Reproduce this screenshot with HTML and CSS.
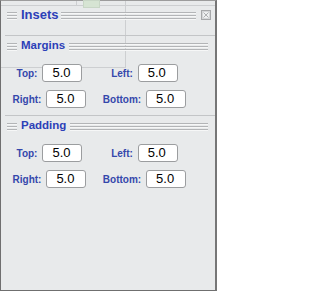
FILE: index.html
```html
<!DOCTYPE html>
<html>
<head>
<meta charset="utf-8">
<link rel="stylesheet" href="styles.css">
</head>
<body>
<div class="palette">
  <div class="backdrop" aria-hidden="true">
    <div class="bd-hline bd-top"></div>
    <div class="bd-vline bd-v1"></div>
    <div class="bd-vline bd-v2"></div>
    <div class="bd-hline bd-mid"></div>
    <div class="bd-green"></div>
  </div>

  <div class="titlebar">
    <span class="grip"></span>
    <span class="title">Insets</span>
    <span class="rules"></span>
    <span class="close">
      <svg width="10" height="10" viewBox="0 0 10 10">
        <rect x="0.5" y="0.5" width="9" height="9" fill="#eef0f1" stroke="#a6a8aa"/>
        <rect x="1.5" y="1.5" width="7" height="7" fill="none" stroke="#d4d6d8"/>
        <path d="M2.5 2.5 L7.5 7.5 M7.5 2.5 L2.5 7.5" stroke="#aeb0b2" stroke-width="1"/>
      </svg>
    </span>
  </div>

  <section class="group">
    <div class="group-head">
      <span class="grip"></span>
      <span class="title">Margins</span>
      <span class="rules"></span>
    </div>
    <div class="fields">
      <label class="field"><span class="lbl">Top:</span><span class="box">5.0</span></label>
      <label class="field"><span class="lbl">Left:</span><span class="box">5.0</span></label>
      <label class="field"><span class="lbl">Right:</span><span class="box">5.0</span></label>
      <label class="field"><span class="lbl">Bottom:</span><span class="box">5.0</span></label>
    </div>
  </section>

  <section class="group">
    <div class="group-head">
      <span class="grip"></span>
      <span class="title">Padding</span>
      <span class="rules"></span>
    </div>
    <div class="fields">
      <label class="field"><span class="lbl">Top:</span><span class="box">5.0</span></label>
      <label class="field"><span class="lbl">Left:</span><span class="box">5.0</span></label>
      <label class="field"><span class="lbl">Right:</span><span class="box">5.0</span></label>
      <label class="field"><span class="lbl">Bottom:</span><span class="box">5.0</span></label>
    </div>
  </section>
</div>
</body>
</html>
```
FILE: styles.css
```css
html, body {
  margin: 0;
  padding: 0;
}
body {
  width: 217px;
  height: 291px;
  overflow: hidden;
  font-family: "Liberation Sans", Arial, sans-serif;
}
.palette {
  position: relative;
  box-sizing: border-box;
  width: 217px;
  height: 291px;
  background: #e8eaeb;
  border-top: 1px solid #9c9c9c;
  border-left: 1px solid #6f6f6f;
  border-right: 2px solid #767676;
  border-bottom: 1px solid #6f6f6f;
}

/* content of the document showing through the translucent palette */
.backdrop {
  position: absolute;
  inset: 0;
  pointer-events: none;
}
.bd-hline {
  position: absolute;
  height: 1px;
  background: #cdcfd1;
}
.bd-top { top: 4px; left: 0; right: 0; }
.bd-mid { top: 66px; left: 0; width: 124px; }
.bd-vline {
  position: absolute;
  width: 1px;
  background: #cdcfd1;
}
.bd-v1 { left: 75px; top: 0; height: 5px; }
.bd-v2 { left: 124px; top: 0; height: 67px; }
.bd-green {
  position: absolute;
  left: 82px;
  top: -1px;
  width: 17px;
  height: 8px;
  background: #d6e4d3;
  border: 1px solid #c8d6c6;
  box-sizing: border-box;
}

.titlebar, .group-head {
  position: relative;
  display: flex;
  align-items: flex-start;
  height: 15px;
}
.titlebar {
  margin-top: 6px;
  padding-left: 6px;
  padding-right: 4px;
}
.grip {
  width: 10px;
  height: 8px;
  margin-top: 5px;
  background: repeating-linear-gradient(to bottom, #b3b5b7 0 1px, #f6f7f7 1px 2px, transparent 2px 3px);
}
.title {
  margin-left: 4px;
  margin-right: 2px;
  font-size: 13px;
  line-height: 15px;
  font-weight: bold;
  color: #2c40b8;
}
.rules {
  flex: 1;
  height: 8px;
  margin-top: 5px;
  background: repeating-linear-gradient(to bottom, #b3b5b7 0 1px, #f6f7f7 1px 2px, transparent 2px 3px);
}
.close {
  width: 10px;
  height: 10px;
  margin-left: 5px;
  margin-top: 3px;
  display: block;
}
.close svg { display: block; }

.group {
  position: relative;
  margin-top: 13px;
  border-top: 1px solid #c3c5c7;
  margin-left: 4px;
}
.group + .group {
  margin-top: 7px;
}
.group-head {
  margin-left: -4px;
  padding-left: 6px;
  padding-right: 7px;
  margin-top: 2px;
}
.group-head .title {
  font-size: 11.5px;
  margin-right: 3px;
}
.group-head .rules { margin-left: 1px; }

.fields {
  display: grid;
  grid-template-columns: 97px 93px;
  grid-auto-rows: 18px;
  row-gap: 8px;
  margin-top: 11px;
  margin-left: -4px;
}
.field {
  justify-self: center;
  display: flex;
  align-items: center;
  gap: 5px;
}
.lbl {
  font-size: 10px;
  font-weight: bold;
  color: #3447ab;
}
.box {
  box-sizing: border-box;
  width: 40px;
  height: 18px;
  background: #ffffff;
  border: 1px solid #9b9d9f;
  border-radius: 3px;
  font-size: 13px;
  line-height: 16px;
  text-align: center;
  color: #000;
  padding-right: 2px;
}
```
